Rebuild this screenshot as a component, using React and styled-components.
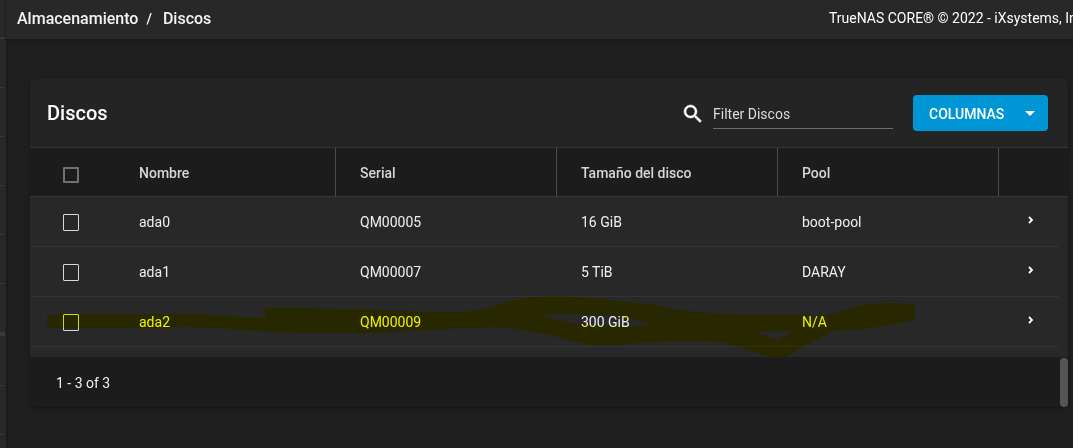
import React from "react";
import styled, { createGlobalStyle } from "styled-components";

const GlobalStyle = createGlobalStyle`
  *, *::before, *::after { box-sizing: border-box; }
  body {
    margin: 0;
    background: #1e1e1e;
    color: #ffffff;
    font-family: Roboto, "Liberation Sans", sans-serif;
    font-size: 14px;
    overflow-x: hidden;
  }
`;

const Shell = styled.div`
  display: grid;
  grid-template-columns: 6px minmax(0, 1fr);
  min-height: 100vh;
`;

const Sidebar = styled.ul`
  margin: 0;
  padding: 0 1px 0 0;
  list-style: none;
  background: #282828;
  height: 100vh;
  overflow: hidden;
  box-shadow: 1px 0 2px #181818;
`;

const SidebarItem = styled.li`
  height: ${({ $height }) => $height || 49}px;
  border-bottom: ${({ $line }) => $line || 1}px solid #383838;
`;

const Page = styled.div`
  display: flex;
  flex-direction: column;
  min-width: 0;
`;

const TopBar = styled.header`
  display: flex;
  align-items: center;
  justify-content: space-between;
  height: 39px;
  padding: 0 0 2px 11px;
  background: #282828;
  box-shadow: 0 1px 2px #181818;
  white-space: nowrap;
`;

const Breadcrumb = styled.nav`
  display: flex;
  gap: 8px;
  font-size: 16px;
  font-weight: 500;
  line-height: 20px;
`;

const Crumb = styled.a`
  color: #f4f4f4;
  text-decoration: none;
`;

const Separator = styled.span`
  padding-right: 3px;
  font-size: 14px;
`;

const Copyright = styled.div`
  width: 244px;
  padding-bottom: 1px;
  overflow: hidden;
  line-height: 20px;
`;

const Main = styled.main`
  padding: 40px 5px 40px 24px;
`;

const Card = styled.section`
  border-radius: 6px;
  background: #242424;
  box-shadow: 0 1px 2px #141414;
`;

const CardHeader = styled.div`
  display: flex;
  align-items: center;
  height: 68px;
  padding: 0 20px 0 17px;
`;

const Title = styled.h1`
  margin: 0 auto 0 0;
  font-size: 20px;
  font-weight: 500;
  line-height: 24px;
`;

const SearchField = styled.label`
  display: flex;
  align-items: center;
  gap: 8px;
  margin-right: 20px;
  padding-top: 2px;
`;

const SearchInput = styled.input`
  width: 180px;
  height: 30px;
  padding: 0;
  border: 0;
  border-bottom: 1px solid #6e6e6e;
  outline: 0;
  background: transparent;
  color: #ffffff;
  font: 400 14px/20px Roboto, "Liberation Sans", sans-serif;

  &::placeholder {
    color: #dcdcdc;
    opacity: 1;
  }
`;

const ColumnsButton = styled.button`
  display: flex;
  align-items: center;
  justify-content: space-between;
  width: 135px;
  height: 36px;
  padding: 2px 12px 0 16px;
  border: 0;
  border-radius: 4px;
  background: #0095d5;
  color: #ffffff;
  font: 500 14px/20px Roboto, "Liberation Sans", sans-serif;
  cursor: pointer;
`;

const TableArea = styled.div`
  position: relative;
  padding-bottom: 10px;
  background: #282828;
`;

const Table = styled.table`
  width: 100%;
  table-layout: fixed;
  border-collapse: separate;
  border-spacing: 0;
`;

const Column = styled.col`
  width: ${({ $width }) => ($width ? `${$width}px` : "auto")};
`;

const HeadCell = styled.th`
  height: 50px;
  padding: 2px 24px 0 24px;
  border-top: 1px solid #333333;
  border-bottom: 1px solid #363636;
  border-right: ${({ $divided }) => ($divided ? "1px solid #4c4c4c" : "0")};
  background: #1c1c1c;
  color: #d6d6d6;
  font-weight: 500;
  line-height: 20px;
  text-align: left;
`;

const Cell = styled.td`
  height: 50px;
  padding: 0 24px;
  border-bottom: 1px solid #333333;
  color: #f0f0f0;
  line-height: 20px;
`;

const SelectHead = styled(HeadCell)`
  padding: 5px 0 0 33px;
`;

const SelectCell = styled(Cell)`
  padding: 1px 0 0 33px;
`;

const ExpandCell = styled(Cell)`
  padding: 0 0 4px 24px;
  border-bottom: 0;
  background: linear-gradient(#333333, #333333) left bottom / calc(100% - 9px) 1px no-repeat;
`;

const Checkbox = styled.input`
  display: block;
  appearance: none;
  width: 16px;
  height: ${({ $muted }) => ($muted ? 16 : 17)}px;
  margin: 0;
  border: ${({ $muted }) => ($muted ? "2px solid #707070" : "1px solid #d8d8d8")};
  border-radius: 1px;
`;

const ExpandButton = styled.button`
  display: grid;
  place-items: center;
  width: 16px;
  height: 16px;
  padding: 0;
  border: 0;
  background: transparent;
  color: #ffffff;
  cursor: pointer;
`;

const Marker = styled.svg`
  position: absolute;
  inset: 0;
  width: 100%;
  height: 100%;
  mix-blend-mode: multiply;
  pointer-events: none;
`;

const Footer = styled.footer`
  display: flex;
  align-items: stretch;
  justify-content: space-between;
  height: 50px;
  padding-left: 26px;
  border-radius: 0 0 6px 6px;
  background: #1c1c1c;
  color: #f0f0f0;
  line-height: 20px;
`;

const Range = styled.span`
  align-self: center;
  padding-top: 2px;
`;

const ScrollThumb = styled.div`
  width: 8px;
  margin-top: 1px;
  border-radius: 4px;
  background: #555555;
`;

const sidebarItems = [
  { height: 39, line: 2 },
  {}, {}, {}, {}, {},
  { height: 52, line: 4 },
  { height: 50 }, {},
];

const columns = ["Nombre", "Serial", "Tamaño del disco", "Pool"];

const disks = [
  { name: "ada0", serial: "QM00005", size: "16 GiB", pool: "boot-pool" },
  { name: "ada1", serial: "QM00007", size: "5 TiB", pool: "DARAY" },
  { name: "ada2", serial: "QM00009", size: "300 GiB", pool: "N/A" },
];

function SearchIcon() {
  return (
    <svg width="24" height="24" viewBox="0 0 24 24" fill="#ffffff" stroke="#ffffff" strokeWidth="0.5" aria-hidden="true">
      <path d="M15.5 14h-.79l-.28-.27A6.47 6.47 0 0 0 16 9.5 6.5 6.5 0 1 0 9.5 16c1.61 0 3.09-.59 4.23-1.57l.27.28v.79l5 4.99L20.49 19l-4.99-5zm-6 0C7.01 14 5 11.99 5 9.5S7.01 5 9.5 5 14 7.01 14 9.5 11.99 14 9.5 14z" />
    </svg>
  );
}

function HighlighterStroke() {
  return (
    <Marker viewBox="0 0 1038 210" preserveAspectRatio="none" aria-hidden="true">
      <path
        fill="#ffff00"
        fillRule="evenodd"
        d="M17 168 L28 167 H170 L190 169 L235 171 V161 H278 L310 162 L335 162 L375 164 L425 165 L440 164 L460 161 L475 155 L500 150 L530 149 L560 151 L600 155 L625 158 L650 163 L680 166 L710 168 H799 L820 161 L840 157 L860 156 L885 157 V173 L865 177 L835 182 L804 184 L770 201 L757 210 H739 L715 202 L697 196 L675 194 H645 L610 196 L585 198 H560 L545 195 L515 187 L480 181 L465 180 L420 182 L380 184 L340 186 H268 L225 184 L185 181 H170 L164 180 H153 L130 181 H17 Z M509 169 L524 167 L590 169 L608 174 L623 178 L600 180 L552 178 L530 173 Z M725 185 L764 184 L748 193 Z"
      />
    </Marker>
  );
}

function DiskRow({ disk }) {
  return (
    <tr>
      <SelectCell>
        <Checkbox type="checkbox" aria-label={`Seleccionar ${disk.name}`} />
      </SelectCell>
      <Cell>{disk.name}</Cell>
      <Cell>{disk.serial}</Cell>
      <Cell>{disk.size}</Cell>
      <Cell>{disk.pool}</Cell>
      <ExpandCell>
        <ExpandButton type="button" aria-label={`Expandir ${disk.name}`}>
          <svg width="8" height="10" viewBox="0 0 8 10" fill="none" stroke="currentColor" strokeWidth="1.8">
            <path d="M2 2 L5 5 L2 8" />
          </svg>
        </ExpandButton>
      </ExpandCell>
    </tr>
  );
}

export default function App() {
  return (
    <>
      <GlobalStyle />
      <Shell>
        <Sidebar aria-hidden="true">
          {sidebarItems.map((item, i) => (
            <SidebarItem key={i} $height={item.height} $line={item.line} />
          ))}
        </Sidebar>
        <Page>
          <TopBar>
            <Breadcrumb>
              <Crumb href="#almacenamiento">Almacenamiento</Crumb>
              <Separator>/</Separator>
              <Crumb href="#discos">Discos</Crumb>
            </Breadcrumb>
            <Copyright>TrueNAS CORE® © 2022 - iXsystems, Inc.</Copyright>
          </TopBar>
          <Main>
            <Card>
              <CardHeader>
                <Title>Discos</Title>
                <SearchField>
                  <SearchIcon />
                  <SearchInput type="text" placeholder="Filter Discos" aria-label="Filter Discos" />
                </SearchField>
                <ColumnsButton type="button">
                  COLUMNAS
                  <svg width="12" height="6" viewBox="0 0 12 6" aria-hidden="true">
                    <path d="M1 0 H11 L6 5 Z" fill="#ffffff" />
                  </svg>
                </ColumnsButton>
              </CardHeader>
              <TableArea>
                <Table>
                  <colgroup>
                    <Column $width={85} />
                    {columns.map((name) => (
                      <Column key={name} />
                    ))}
                    <Column $width={69} />
                  </colgroup>
                  <thead>
                    <tr>
                      <SelectHead>
                        <Checkbox type="checkbox" $muted aria-label="Seleccionar todo" />
                      </SelectHead>
                      {columns.map((name) => (
                        <HeadCell key={name} $divided>{name}</HeadCell>
                      ))}
                      <HeadCell aria-label="Detalles" />
                    </tr>
                  </thead>
                  <tbody>
                    {disks.map((disk) => (
                      <DiskRow key={disk.name} disk={disk} />
                    ))}
                  </tbody>
                </Table>
                <HighlighterStroke />
              </TableArea>
              <Footer>
                <Range>1 - 3 of 3</Range>
                <ScrollThumb />
              </Footer>
            </Card>
          </Main>
        </Page>
      </Shell>
    </>
  );
}
